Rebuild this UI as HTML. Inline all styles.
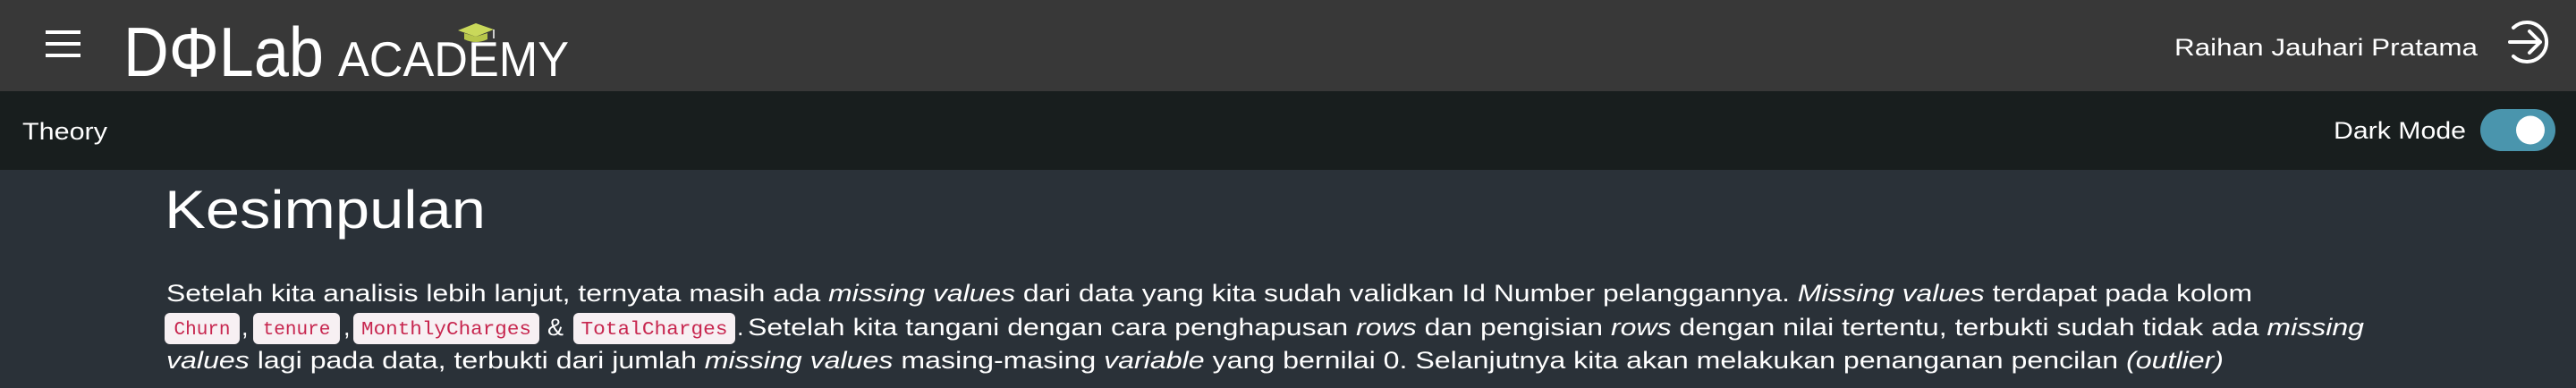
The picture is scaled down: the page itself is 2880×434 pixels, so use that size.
<!DOCTYPE html>
<html><head><meta charset="utf-8"><style>
html,body{margin:0;padding:0;width:2880px;height:434px;overflow:hidden;background:#2a3138;font-family:"Liberation Sans",sans-serif;}
</style></head><body>
<svg width="2880" height="434" viewBox="0 0 2880 434" xmlns="http://www.w3.org/2000/svg" style="position:absolute;left:0;top:0">
<rect x="0" y="0" width="2880" height="102" fill="#383838"/>
<rect x="0" y="102" width="2880" height="88" fill="#181e1e"/>
<rect x="0" y="190" width="2880" height="244" fill="#2a3138"/>
<!-- hamburger -->
<rect x="51" y="34" width="39" height="4" fill="#fff"/>
<rect x="51" y="47" width="39" height="4" fill="#fff"/>
<rect x="51" y="60" width="39" height="4" fill="#fff"/>
<!-- logo -->
<text x="138" y="85" font-family="Liberation Sans" font-size="78" fill="#fff" textLength="224" lengthAdjust="spacingAndGlyphs">DΦLab</text>
<text x="378" y="85" font-family="Liberation Sans" font-size="55" fill="#fff" textLength="258" lengthAdjust="spacingAndGlyphs">ACADEMY</text>
<polygon points="512,34 532,26 552,33 532,41" fill="#c9d85a"/>
<path d="M519,37 L519,44 Q532,50 545,44 L545,37 L532,41 Z" fill="#b7c64a"/>
<line x1="552" y1="33" x2="552" y2="43" stroke="#fff" stroke-width="1.5"/>
<!-- user -->
<text x="2770" y="62" font-family="Liberation Sans" font-size="27" fill="#fff" text-anchor="end" textLength="339" lengthAdjust="spacingAndGlyphs">Raihan Jauhari Pratama</text>
<path d="M2810,31 A22,22 0 1 1 2810,63" fill="none" stroke="#fff" stroke-width="4" stroke-linecap="round"/>
<path d="M2806,47 L2840,47 M2828,35 L2840,47 L2828,59" fill="none" stroke="#fff" stroke-width="4" stroke-linecap="round" stroke-linejoin="round"/>
<!-- subbar -->
<text x="25" y="156" font-family="Liberation Sans" font-size="27" fill="#fff" textLength="95" lengthAdjust="spacingAndGlyphs">Theory</text>
<text x="2757" y="155" font-family="Liberation Sans" font-size="27" fill="#fff" text-anchor="end" textLength="148" lengthAdjust="spacingAndGlyphs">Dark Mode</text>
<rect x="2773" y="122" width="84" height="47" rx="23.5" fill="#4a95ad"/>
<circle cx="2829" cy="145.5" r="16" fill="#fff"/>
<!-- heading -->
<text x="184" y="255" font-family="Liberation Sans" font-size="60" fill="#fff" textLength="359" lengthAdjust="spacingAndGlyphs">Kesimpulan</text>
<!-- body line1 -->
<text x="186" y="337" font-family="Liberation Sans" font-size="27" fill="#fff" textLength="2332" lengthAdjust="spacingAndGlyphs">Setelah kita analisis lebih lanjut, ternyata masih ada <tspan font-style="italic">missing values</tspan> dari data yang kita sudah validkan Id Number pelanggannya. <tspan font-style="italic">Missing values</tspan> terdapat pada kolom</text>
<!-- chips -->
<g font-family="Liberation Mono" font-size="21" fill="#c7254e" text-anchor="middle">
<rect x="184" y="350" width="84" height="35" rx="6" fill="#f7f0f3"/><text x="226" y="374">Churn</text>
<rect x="283" y="350" width="97" height="35" rx="6" fill="#f7f0f3"/><text x="331.5" y="374">tenure</text>
<rect x="395" y="350" width="208" height="35" rx="6" fill="#f7f0f3"/><text x="499" y="374" textLength="190" lengthAdjust="spacingAndGlyphs">MonthlyCharges</text>
<rect x="641" y="350" width="181" height="35" rx="6" fill="#f7f0f3"/><text x="731.5" y="374" textLength="164" lengthAdjust="spacingAndGlyphs">TotalCharges</text>
</g>
<g font-family="Liberation Sans" font-size="27" fill="#fff">
<text x="270" y="375">,</text>
<text x="384" y="375">,</text>
<text x="612" y="375">&amp;</text>
<text x="824" y="375">.</text>
</g>
<text x="836" y="375" font-family="Liberation Sans" font-size="27" fill="#fff" textLength="1807" lengthAdjust="spacingAndGlyphs">Setelah kita tangani dengan cara penghapusan <tspan font-style="italic">rows</tspan> dan pengisian <tspan font-style="italic">rows</tspan> dengan nilai tertentu, terbukti sudah tidak ada <tspan font-style="italic">missing</tspan></text>
<text x="186" y="412" font-family="Liberation Sans" font-size="27" fill="#fff" textLength="2300" lengthAdjust="spacingAndGlyphs"><tspan font-style="italic">values</tspan> lagi pada data, terbukti dari jumlah <tspan font-style="italic">missing values</tspan> masing-masing <tspan font-style="italic">variable</tspan> yang bernilai 0. Selanjutnya kita akan melakukan penanganan pencilan <tspan font-style="italic">(outlier)</tspan></text>
</svg>
</body></html>
